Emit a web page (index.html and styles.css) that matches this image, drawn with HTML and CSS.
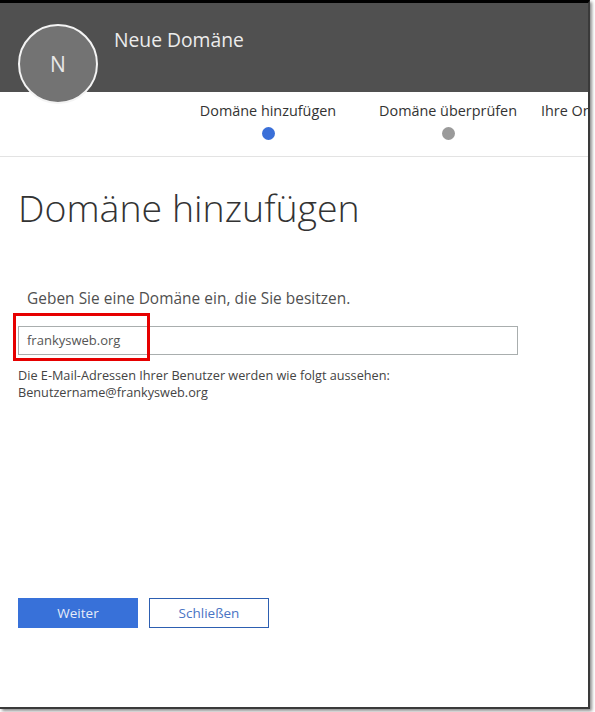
FILE: index.html
```html
<!DOCTYPE html>
<html lang="de">
<head>
<meta charset="utf-8">
<link rel="stylesheet" href="styles.css">
</head>
<body>
<div class="window">
  <header class="header">
    <div class="avatar">N</div>
    <div class="title">Neue Domäne</div>
  </header>
  <nav class="steps">
    <div class="step step-1"><span class="label">Domäne hinzufügen</span><span class="dot active"></span></div>
    <div class="step step-2"><span class="label">Domäne überprüfen</span><span class="dot"></span></div>
    <div class="step step-3"><span class="label">Ihre Online-Dienste einrichten</span></div>
  </nav>
  <main class="content">
    <h1 class="heading">Domäne hinzufügen</h1>
    <p class="prompt">Geben Sie eine Domäne ein, die Sie besitzen.</p>
    <div class="field">
      <div class="input">frankysweb.org</div>
      <div class="highlight"></div>
    </div>
    <p class="hint">Die E-Mail-Adressen Ihrer Benutzer werden wie folgt aussehen:<br>Benutzername@frankysweb.org</p>
    <div class="buttons">
      <button class="btn btn-primary">Weiter</button>
      <button class="btn btn-secondary">Schließen</button>
    </div>
  </main>
</div>
</body>
</html>
```
FILE: styles.css
```css
html, body {
  margin: 0;
  padding: 0;
  background: #ffffff;
}
body {
  font-family: "Open Sans", "Noto Sans", sans-serif;
  width: 595px;
  height: 712px;
  overflow: hidden;
}
.window {
  width: 588px;
  height: 704px;
  border-top: 3px solid #000;
  border-right: 2px solid #3a3a3a;
  border-bottom: 2px solid #3a3a3a;
  background: #fff;
  box-shadow: 2px 2px 3px rgba(0,0,0,0.45);
  overflow: hidden;
  position: relative;
}
.header {
  height: 89px;
  background: #505050;
  display: flex;
  align-items: flex-start;
  padding-left: 18px;
  gap: 16px;
}
.avatar {
  width: 76px;
  height: 76px;
  margin-top: 21px;
  border: 2px solid #f4f4f4;
  border-radius: 50%;
  background: #737373;
  color: #e8e8e8;
  font-size: 21px;
  display: flex;
  align-items: center;
  justify-content: center;
  position: relative;
  z-index: 1;
  flex-shrink: 0;
}
.title {
  margin-top: 23px;
  color: #ececec;
  font-size: 19.3px;
  white-space: nowrap;
}
.steps {
  height: 64px;
  border-bottom: 1px solid #e3e3e3;
  display: flex;
  padding-left: 200px;
  gap: 44px;
  white-space: nowrap;
  overflow: hidden;
}
.step {
  display: flex;
  flex-direction: column;
  align-items: center;
  padding-top: 9px;
  color: #333;
  font-size: 14.4px;
  flex-shrink: 0;
}
.step-1 { width: 136px; }
.step-2 { width: 136px; }
.step-3 { align-items: flex-start; margin-left: -19px; }
.dot {
  width: 13px;
  height: 13px;
  border-radius: 50%;
  background: #9a9a9a;
  margin-top: 7px;
}
.dot.active { background: #3a6fd8; }
.content {
  padding: 0 18px;
}
.heading {
  margin: 26px 0 0 0;
  font-weight: 300;
  font-size: 37.5px;
  color: #333;
  line-height: 50px;
}
.prompt {
  margin: 56px 0 0 9px;
  font-size: 15.4px;
  color: #505050;
  line-height: 20px;
  letter-spacing: 0.05px;
}
.field {
  position: relative;
  margin-top: 17px;
  width: 500px;
}
.input {
  height: 27px;
  border: 1px solid #a9aeae;
  font-size: 13px;
  color: #555;
  padding-left: 8px;
  line-height: 27px;
}
.highlight {
  position: absolute;
  left: -5px;
  top: -13px;
  width: 131px;
  height: 42px;
  border: 3px solid #e60000;
}
.hint {
  margin: 12px 0 0 0;
  font-size: 12.7px;
  line-height: 17px;
  color: #444;
}
.buttons {
  margin-top: 197px;
  display: flex;
  gap: 11px;
}
.btn {
  width: 120px;
  height: 30px;
  font-family: inherit;
  font-size: 13.5px;
  padding: 0;
  cursor: pointer;
}
.btn-primary {
  background: #3871d9;
  border: none;
  color: #e6ecf8;
}
.btn-secondary {
  background: #fff;
  border: 1px solid #2d5fb1;
  color: #4a74c4;
}
```
